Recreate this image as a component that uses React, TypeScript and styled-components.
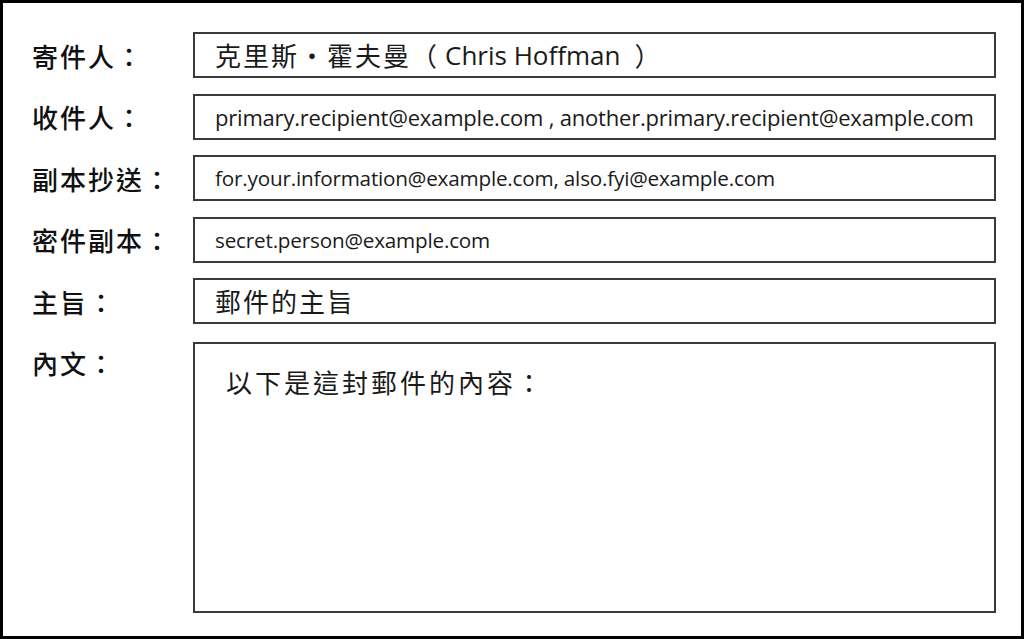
import styled, { createGlobalStyle } from "styled-components";

const GlobalStyle = createGlobalStyle`
  html, body {
    margin: 0;
    padding: 0;
    background: #ffffff;
  }
`;

const Sheet = styled.div`
  box-sizing: border-box;
  width: 1024px;
  height: 639px;
  border: 3px solid #000;
  padding: 29px 25px 23px 29px;
  display: grid;
  grid-template-columns: 161px 1fr;
  grid-template-rows: repeat(5, 46px) 1fr;
  row-gap: 15.5px;
  background: #fff;
`;

const Label = styled.div`
  height: 46px;
  display: flex;
  align-items: center;
  font-family: "Noto Sans CJK TC", "Noto Sans", sans-serif;
  font-size: 26px;
  font-weight: 500;
  letter-spacing: 2px;
  color: #111;
  white-space: nowrap;
`;

const Field = styled.div<{ $size?: number; $cjk?: boolean }>`
  box-sizing: border-box;
  height: 46px;
  border: 2px solid #3a3a3a;
  display: flex;
  align-items: center;
  padding-left: 20px;
  font-family: "Open Sans", "Noto Sans CJK TC", sans-serif;
  font-size: ${(p) => p.$size ?? 20.7}px;
  letter-spacing: ${(p) => (p.$cjk ? "2px" : "-0.2px")};
  color: #1a1a1a;
  white-space: nowrap;
  overflow: hidden;
`;

const Latin = styled.span`
  letter-spacing: 0;
  font-size: 26px;
  margin: 0 14px 0 6px;
`;

const BodyBox = styled.div`
  box-sizing: border-box;
  margin-top: 2.5px;
  border: 2px solid #3a3a3a;
  padding: 19px 0 0 31px;
  font-family: "Noto Sans CJK TC", sans-serif;
  font-size: 26px;
  letter-spacing: 3px;
  color: #1a1a1a;
`;

export default function App() {
  return (
    <>
      <GlobalStyle />
      <Sheet>
        <Label>寄件人：</Label>
        <Field $size={26} $cjk>
          克里斯・霍夫曼（<Latin>Chris Hoffman</Latin>）
        </Field>

        <Label>收件人：</Label>
        <Field $size={22}>
          primary.recipient@example.com , another.primary.recipient@example.com
        </Field>

        <Label>副本抄送：</Label>
        <Field>for.your.information@example.com, also.fyi@example.com</Field>

        <Label>密件副本：</Label>
        <Field>secret.person@example.com</Field>

        <Label>主旨：</Label>
        <Field $size={26} $cjk>
          郵件的主旨
        </Field>

        <Label>內文：</Label>
        <BodyBox>以下是這封郵件的內容：</BodyBox>
      </Sheet>
    </>
  );
}
